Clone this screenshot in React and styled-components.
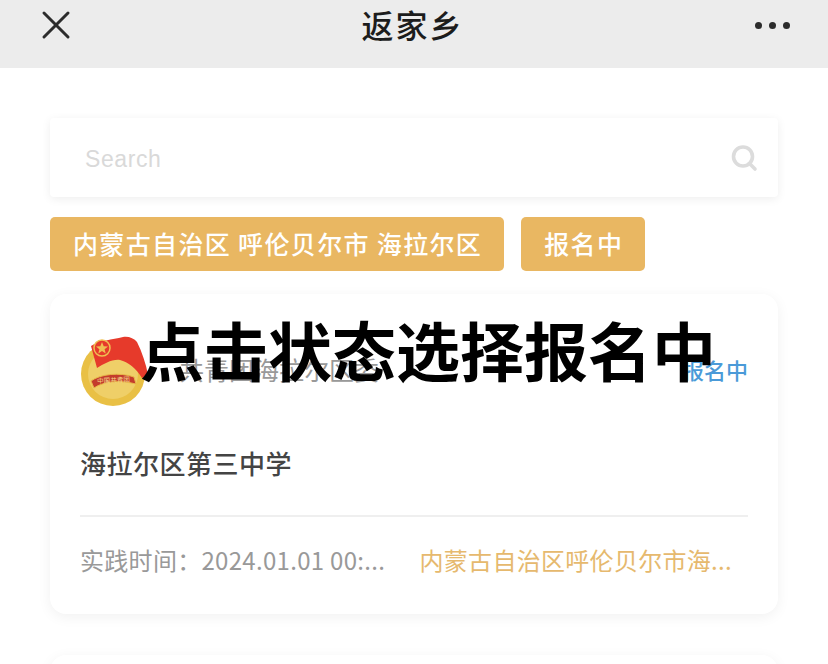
import styled, { createGlobalStyle } from 'styled-components';
import { X } from 'lucide-react';

const GlobalStyle = createGlobalStyle`
  html, body {
    margin: 0;
    padding: 0;
    background: #fff;
    overflow: hidden;
  }
  * { box-sizing: border-box; }
`

const Page = styled.div`
  position: relative;
  width: 828px;
  height: 664px;
  overflow: hidden;
  background: #fff;
  font-family: "Noto Sans CJK SC", "Noto Sans", sans-serif;
`

const NavBar = styled.header`
  height: 68px;
  background: #ececec;
  display: flex;
  align-items: flex-start;
  justify-content: space-between;
  padding: 5px 38px 0 32px;
  color: #222;
`

const NavTitle = styled.h1`
  margin: 0 10px 0 0;
  font-size: 32px;
  line-height: 38px;
  font-weight: 500;
  letter-spacing: 2px;
  color: #1c1c1c;
`

const CloseButton = styled.div`
  width: 48px;
  height: 40px;
  display: flex;
  align-items: center;
  justify-content: center;
  color: #2c2c2c;
`

const MoreDots = styled.div`
  display: flex;
  gap: 7px;
  padding-top: 17px;
  span {
    width: 7px;
    height: 7px;
    border-radius: 50%;
    background: #2c2c2c;
  }
`

const Content = styled.main`
  padding: 50px 50px 0;
`

const SearchBox = styled.div`
  height: 79px;
  display: flex;
  align-items: center;
  justify-content: space-between;
  padding: 0 20px 0 35px;
  background: #fff;
  border-radius: 4px;
  box-shadow: 0 2px 10px rgba(0, 0, 0, 0.07);
`

const SearchPlaceholder = styled.span`
  padding-top: 3px;
  font-family: "Liberation Sans", sans-serif;
  font-size: 23px;
  letter-spacing: 0.6px;
  color: #d9d9d9;
`

const Filters = styled.div`
  display: flex;
  gap: 17px;
  margin-top: 20px;
`

const FilterTag = styled.div`
  height: 54px;
  padding: 0 22px 3px 23px;
  display: flex;
  align-items: center;
  border-radius: 5px;
  background: #e9b762;
  color: #fff;
  font-size: 25px;
  font-weight: 500;
  letter-spacing: 1.35px;
  white-space: pre;
`

const Card = styled.section`
  margin-top: 23px;
  height: 320px;
  padding: 42px 30px 0;
  background: #fff;
  border-radius: 16px;
  box-shadow: 0 3px 14px rgba(0, 0, 0, 0.06);
`

const NextCard = styled(Card)`
  margin-top: 41px;
  height: 100px;
`

const CardHead = styled.div`
  display: flex;
  align-items: center;
  justify-content: space-between;
  height: 66px;
`

const Org = styled.div`
  display: flex;
  align-items: center;
  gap: 31px;
`

const OrgName = styled.span`
  font-size: 25px;
  color: #999;
`

const Status = styled.span`
  font-size: 22px;
  font-weight: 500;
  color: #4a9ad8;
`

const CardTitle = styled.h2`
  margin: 42px 0 0;
  font-size: 26px;
  line-height: 38px;
  font-weight: 500;
  letter-spacing: 0.5px;
  color: #444;
`

const Divider = styled.hr`
  margin: 33px 0 0;
  border: 0;
  height: 2px;
  background: #efefef;
`

const CardFoot = styled.div`
  display: flex;
  justify-content: space-between;
  margin-top: 26px;
  font-size: 24px;
  line-height: 34px;
  padding-right: 16px;
`

const TimeText = styled.span`
  color: #999;
  letter-spacing: 0.3px;
`

const PlaceText = styled.span`
  color: #e6b96e;
  letter-spacing: 0.3px;
`

const Caption = styled.div`
  position: absolute;
  left: 28px;
  right: 0;
  top: 302px;
  text-align: center;
  font-size: 64px;
  line-height: 92px;
  font-weight: 700;
  color: #000;
  white-space: nowrap;
`

const SearchIcon = () => (
  <svg width="28" height="28" viewBox="0 0 28 28" fill="none" stroke="#dcdcdc" strokeWidth="3.6" strokeLinecap="round">
    <circle cx="13" cy="12.5" r="9.5" />
    <path d="M19.5 19.5L25 25" />
  </svg>
)

const Badge = () => (
  <svg width="68" height="74" viewBox="0 0 68 74">
    <circle cx="33" cy="42" r="32" fill="#e9c045" />
    <circle cx="33" cy="42" r="25" fill="#efcf68" />
    <path d="M11 14C20 8 32 8 43 5C48 4 54 6 57 10C62 20 66 32 68 43L62 46C56 36 48 30 40 28C32 27 24 32 17 36Z" fill="#e63a2b" />
    <circle cx="22" cy="16" r="8" fill="#e63a2b" stroke="#efc052" strokeWidth="1.5" />
    <path d="M22 10L23.700 14.200L28 14.400L24.600 17.200L25.700 21.500L22 19.100L18.300 21.500L19.400 17.200L16 14.400L20.300 14.200Z" fill="#efc052" />
    <path d="M11 49C20 42 40 40 54 45L56 52C40 48 24 49 14 56Z" fill="#c43c2c" stroke="#e8b84a" strokeWidth="1" />
    <text x="17" y="50.500" fontSize="6.500" fill="#f5d98a" textLength="33" transform="rotate(-3 33 48)">中国共青团</text>
  </svg>
)

export default function App() {
  return (
    <Page>
      <GlobalStyle />
      <NavBar>
        <CloseButton><X size={48} strokeWidth={3} absoluteStrokeWidth /></CloseButton>
        <NavTitle>返家乡</NavTitle>
        <MoreDots><span /><span /><span /></MoreDots>
      </NavBar>
      <Content>
        <SearchBox>
          <SearchPlaceholder>Search</SearchPlaceholder>
          <SearchIcon />
        </SearchBox>
        <Filters>
          <FilterTag>内蒙古自治区 呼伦贝尔市 海拉尔区</FilterTag>
          <FilterTag>报名中</FilterTag>
        </Filters>
        <Card>
          <CardHead>
            <Org>
              <Badge />
              <OrgName>共青团海拉尔区委</OrgName>
            </Org>
            <Status>报名中</Status>
          </CardHead>
          <CardTitle>海拉尔区第三中学</CardTitle>
          <Divider />
          <CardFoot>
            <TimeText>实践时间：2024.01.01 00:...</TimeText>
            <PlaceText>内蒙古自治区呼伦贝尔市海...</PlaceText>
          </CardFoot>
        </Card>
        <NextCard />
      </Content>
      <Caption>点击状态选择报名中</Caption>
    </Page>
  )
}
